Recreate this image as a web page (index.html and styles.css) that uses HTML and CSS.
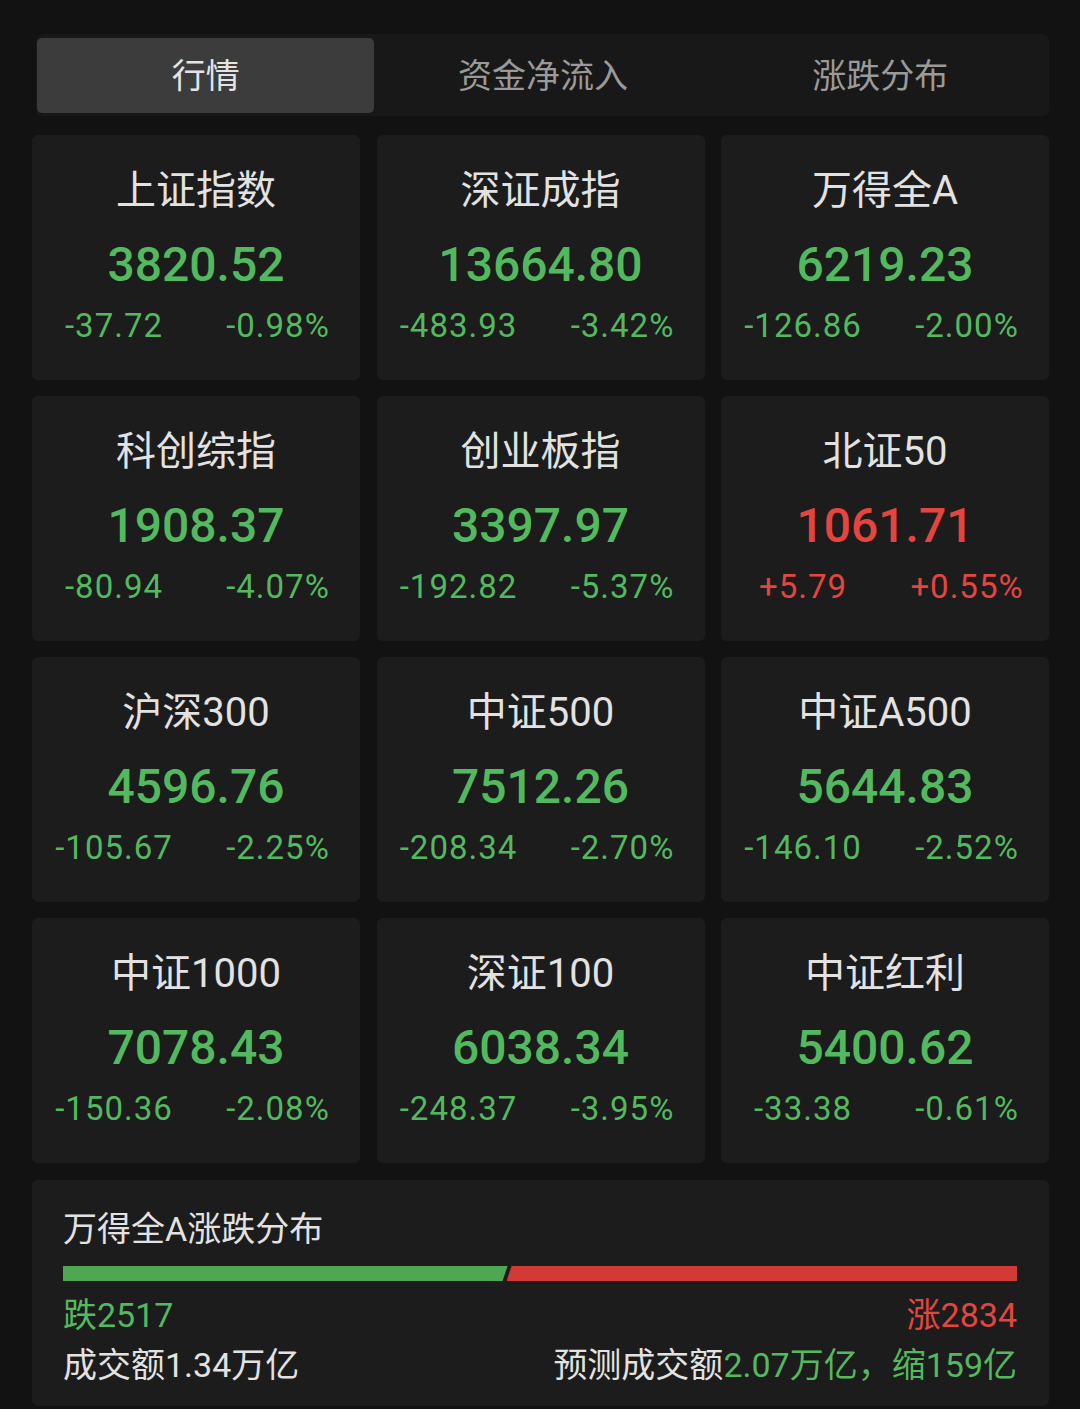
FILE: index.html
```html
<!DOCTYPE html>
<html lang="zh-CN">
<head>
<meta charset="utf-8">
<link rel="stylesheet" href="styles.css">
</head>
<body>
<div class="page">
  <div class="tabs">
    <div class="tab active">行情</div>
    <div class="tab">资金净流入</div>
    <div class="tab">涨跌分布</div>
  </div>
  <div class="grid">
    <div class="card"><div class="name">上证指数</div><div class="val down">3820.52</div><div class="chg down"><span>-37.72</span><span>-0.98%</span></div></div>
    <div class="card"><div class="name">深证成指</div><div class="val down">13664.80</div><div class="chg down"><span>-483.93</span><span>-3.42%</span></div></div>
    <div class="card"><div class="name">万得全A</div><div class="val down">6219.23</div><div class="chg down"><span>-126.86</span><span>-2.00%</span></div></div>
    <div class="card"><div class="name">科创综指</div><div class="val down">1908.37</div><div class="chg down"><span>-80.94</span><span>-4.07%</span></div></div>
    <div class="card"><div class="name">创业板指</div><div class="val down">3397.97</div><div class="chg down"><span>-192.82</span><span>-5.37%</span></div></div>
    <div class="card"><div class="name">北证50</div><div class="val up">1061.71</div><div class="chg up"><span>+5.79</span><span>+0.55%</span></div></div>
    <div class="card"><div class="name">沪深300</div><div class="val down">4596.76</div><div class="chg down"><span>-105.67</span><span>-2.25%</span></div></div>
    <div class="card"><div class="name">中证500</div><div class="val down">7512.26</div><div class="chg down"><span>-208.34</span><span>-2.70%</span></div></div>
    <div class="card"><div class="name">中证A500</div><div class="val down">5644.83</div><div class="chg down"><span>-146.10</span><span>-2.52%</span></div></div>
    <div class="card"><div class="name">中证1000</div><div class="val down">7078.43</div><div class="chg down"><span>-150.36</span><span>-2.08%</span></div></div>
    <div class="card"><div class="name">深证100</div><div class="val down">6038.34</div><div class="chg down"><span>-248.37</span><span>-3.95%</span></div></div>
    <div class="card"><div class="name">中证红利</div><div class="val down">5400.62</div><div class="chg down"><span>-33.38</span><span>-0.61%</span></div></div>
  </div>
  <div class="dist">
    <div class="dist-title">万得全A涨跌分布</div>
    <div class="bar">
      <div class="bar-down" style="width:46.6%"></div>
      <div class="bar-up"></div>
    </div>
    <div class="counts"><span class="down">跌2517</span><span class="up">涨2834</span></div>
    <div class="amount"><span>成交额1.34万亿</span><span>预测成交额<span class="down">2.07万亿，缩159亿</span></span></div>
  </div>
</div>
</body>
</html>
```
FILE: styles.css
```css
* { box-sizing: border-box; margin: 0; padding: 0; }
html, body { background: #121212; }
body {
  font-family: Roboto, "Noto Sans CJK SC", sans-serif;
  color: #e2e2e2;
}
.page {
  width: 1080px;
  padding: 34px 31px 0 32px;
}
.tabs {
  display: grid;
  grid-template-columns: 1fr 1fr 1fr;
  margin: 0 0 0 4px;
  height: 82px;
  padding: 4px 0 3px 1px;
  background: #181818;
  border-radius: 6px;
}
.tab {
  display: flex;
  align-items: center;
  justify-content: center;
  font-size: 34px;
  padding-bottom: 5px;
  color: #9a9a9a;
  border-radius: 5px;
}
.tab.active {
  background: #3c3c3c;
  color: #e4e4e4;
}
.grid {
  margin-top: 19px;
  display: grid;
  grid-template-columns: repeat(3, 328px);
  column-gap: 16.5px;
  row-gap: 16px;
}
.card {
  height: 245px;
  background: #1c1c1c;
  border-radius: 6px;
  padding-top: 31px;
  display: flex;
  flex-direction: column;
  align-items: stretch;
  text-align: center;
}
.name {
  font-size: 40px;
  line-height: 50px;
  color: #e2e2e2;
}
.val {
  margin-top: 21px;
  font-size: 48px;
  line-height: 56px;
  font-weight: 500;
}
.chg {
  margin-top: 11px;
  font-size: 33px;
  line-height: 44px;
  letter-spacing: 1px;
  display: grid;
  grid-template-columns: 1fr 1fr;
}
.down { color: #53b95f; }
.up { color: #e4463f; }
.dist {
  margin-top: 17px;
  background: #1c1c1c;
  border-radius: 6px;
  height: 226px;
  padding: 27px 32px 0 31px;
}
.dist-title {
  font-size: 34px;
  line-height: 44px;
  color: #e2e2e2;
}
.bar {
  margin-top: 15px;
  height: 15px;
  display: flex;
  gap: 3px;
}
.bar-down {
  background: #4ea853;
  clip-path: polygon(0 0, 100% 0, calc(100% - 5px) 100%, 0 100%);
}
.bar-up {
  flex: 1;
  margin-left: -4px;
  background: #d23a33;
  clip-path: polygon(5px 0, 100% 0, 100% 100%, 0 100%);
}
.counts {
  margin-top: 13px;
  display: flex;
  justify-content: space-between;
  font-size: 34px;
  line-height: 42px;
}
.amount {
  margin-top: 8px;
  display: flex;
  justify-content: space-between;
  font-size: 34px;
  line-height: 42px;
  color: #e2e2e2;
}
```
